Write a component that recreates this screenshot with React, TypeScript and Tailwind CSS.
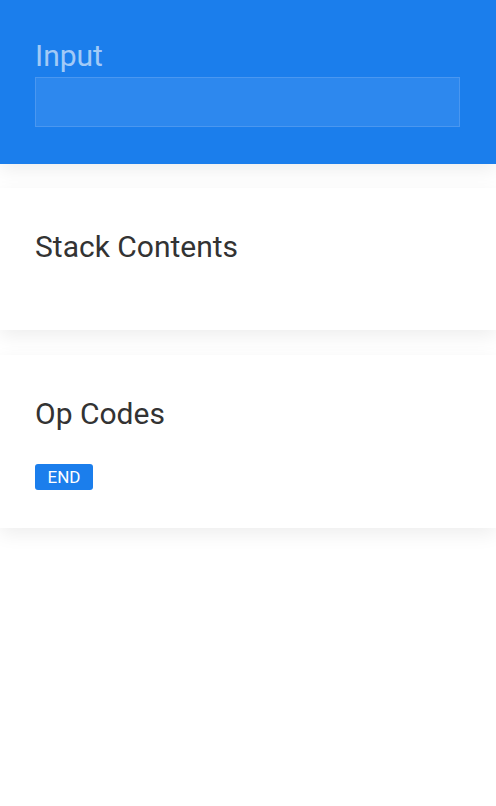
import React from 'react';

function Card({ title, children }: { title: string; children?: React.ReactNode }) {
  return (
    <section className="relative bg-white px-[35px] pt-[41px] pb-[38px] shadow-[0_6px_18px_rgba(0,0,0,0.07)]">
      <h2 className="text-[30px] leading-[36px] text-[#333333] mb-[27px]">{title}</h2>
      {children}
    </section>
  );
}

function App() {
  return (
    <div className="min-h-screen bg-white font-['Roboto',sans-serif]">
      {/* Header - input area */}
      <header className="relative z-10 bg-[#1b7eec] px-[35px] pt-[38px] pb-[37px] shadow-[0_6px_18px_rgba(0,0,0,0.07)]">
        <label className="block text-[30px] leading-[36px] text-white/60">Input</label>
        <input
          type="text"
          className="mt-[3px] block w-[425px] h-[50px] bg-[#2d88ee] border border-[#4a97f0] outline-none px-3 text-white text-lg"
        />
      </header>

      <main className="flex flex-col gap-[25px] mt-[24px]">
        {/* Stack Contents */}
        <Card title="Stack Contents" />

        {/* Op Codes */}
        <Card title="Op Codes">
          <div className="flex flex-wrap gap-2 pt-[5px]">
            <span className="inline-flex items-center justify-center h-[26px] w-[58px] rounded-[3px] bg-[#1b7eec] text-white text-[17px] leading-none">
              END
            </span>
          </div>
        </Card>
      </main>
    </div>
  );
}

export default App;
